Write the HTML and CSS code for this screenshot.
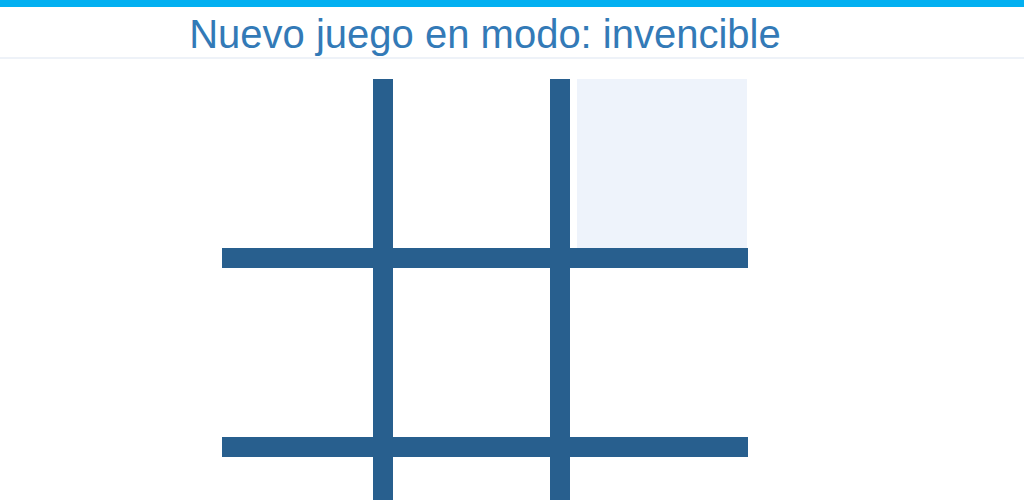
FILE: index.html
```html
<!DOCTYPE html>
<html lang="es">
<head>
<meta charset="utf-8">
<title>Tres en raya</title>
<link rel="stylesheet" href="styles.css">
</head>
<body>
<div class="topbar"></div>
<div class="page">
  <header class="header">
    <h1 class="title">Nuevo juego en modo: invencible</h1>
  </header>
  <main class="board">
    <div class="cell c1 r1"></div>
    <div class="cell c3 r1"></div>
    <div class="cell c5 r1 hover"></div>
    <div class="cell c1 r3"></div>
    <div class="cell c3 r3"></div>
    <div class="cell c5 r3"></div>
    <div class="cell c1 r5"></div>
    <div class="cell c3 r5"></div>
    <div class="cell c5 r5"></div>
    <div class="line vline v1"></div>
    <div class="line vline v2"></div>
    <div class="line hline h1"></div>
    <div class="line hline h2"></div>
  </main>
</div>
</body>
</html>
```

FILE: styles.css
```css
html, body {
  margin: 0;
  padding: 0;
  background: #ffffff;
  overflow: hidden;
}

body {
  font-family: "Liberation Sans", Arial, sans-serif;
}

.topbar {
  height: 7px;
  background: #03b0f1;
}

.header {
  border-bottom: 2px solid #eef2f8;
}

.title {
  width: 970px;
  margin: 0;
  padding-top: 5px;
  height: 45px;
  line-height: 45px;
  font-size: 40px;
  font-weight: normal;
  color: #337ab7;
  text-align: center;
}

.board {
  width: 526px;
  margin: 20px 0 0 222px;
  display: grid;
  grid-template-columns: 151px 20px 157px 20px 178px;
  grid-template-rows: 169px 20px 169px 20px 169px;
}

.cell { background: transparent; }
.c1 { grid-column: 1; }
.c3 { grid-column: 3; }
.c5 { grid-column: 5; }
.r1 { grid-row: 1; }
.r3 { grid-row: 3; }
.r5 { grid-row: 5; }

.cell.hover {
  background: #eef3fb;
  margin: 0 1px 0 7px;
}

.line { background: #285f8e; }
.vline { grid-row: 1 / -1; }
.v1 { grid-column: 2; }
.v2 { grid-column: 4; }
.hline { grid-column: 1 / -1; }
.h1 { grid-row: 2; }
.h2 { grid-row: 4; }
```
